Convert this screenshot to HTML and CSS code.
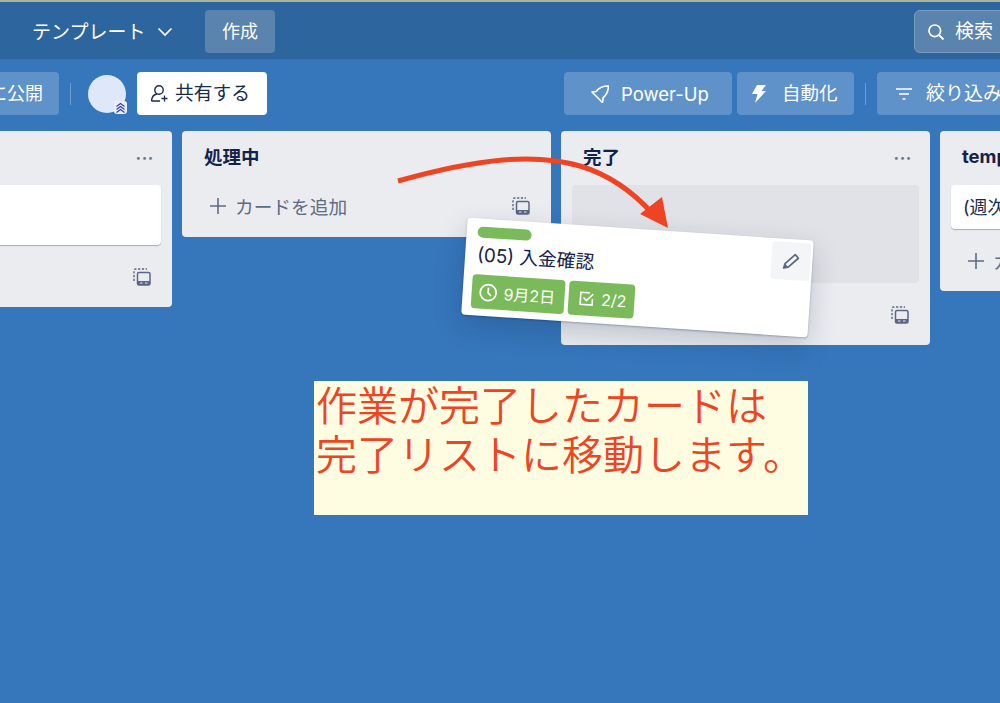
FILE: index.html
```html
<!DOCTYPE html>
<html lang="ja">
<head>
    <meta charset="UTF-8">
    <title>ボード</title>
    <link rel="stylesheet" href="styles.css">
</head>
<body>
    <header class="topbar">
        <div class="topbar-left">
            <a class="menu-link" href="#"><span class="jp">テンプレート</span>
                <svg class="chevron" width="16" height="10" viewBox="0 0 16 10"><path d="M1.500 1.500 8 8l6.500-6.500" fill="none" stroke="currentColor" stroke-width="1.700"/></svg>
            </a>
            <button class="create-btn"><span class="jp">作成</span></button>
        </div>
        <div class="search">
            <svg width="18" height="18" viewBox="0 0 18 18"><circle cx="7.800" cy="7.800" r="5.800" fill="none" stroke="currentColor" stroke-width="1.700"/><path d="m12 12 4.500 4.500" stroke="currentColor" stroke-width="1.800"/></svg>
            <span class="jp">検索</span>
        </div>
    </header>

    <nav class="boardbar">
        <div class="boardbar-left">
            <button class="bar-btn public-btn"><span class="jp">に公開</span></button>
            <span class="divider"></span>
            <span class="avatar">
                <span class="avatar-badge">
                    <svg width="11" height="11" viewBox="0 0 11 11"><path d="M1.500 4.500 5.500 1.500l4 3M1.500 7.500l4-3 4 3M1.500 10.500l4-3 4 3" fill="none" stroke="#2a3fb0" stroke-width="1.100"/></svg>
                </span>
            </span>
            <button class="share-btn">
                <svg width="19" height="19" viewBox="0 0 19 19"><circle cx="9" cy="6" r="4.200" fill="none" stroke="#1c2b4f" stroke-width="1.400"/><path d="M1.500 17c.3-4 2.500-6.500 5.500-7M10 17H1.500" fill="none" stroke="#1c2b4f" stroke-width="1.400"/><path d="M14.500 11.500v6M11.500 14.500h6" stroke="#1c2b4f" stroke-width="1.300"/></svg>
                <span class="jp">共有する</span>
            </button>
        </div>
        <div class="boardbar-right">
            <button class="bar-btn powerup-btn">
                <svg width="18" height="18" viewBox="0 0 18 18"><path d="M17.500 1C12 1 7.500 3 5 6.500L1 7l4 4 3 3 3.500 3.500.8-5C15.500 10 17.200 6 17.500 1z" fill="none" stroke="currentColor" stroke-width="1.600" stroke-linejoin="round"/></svg>
                Power-Up
            </button>
            <button class="bar-btn auto-btn">
                <svg width="14" height="18" viewBox="0 0 14 18"><path d="M5 0h9L9.500 6H14L3 18l2.500-9H0z" fill="currentColor"/></svg>
                <span class="jp">自動化</span>
            </button>
            <span class="divider"></span>
            <button class="bar-btn filter-btn">
                <svg width="16" height="12" viewBox="0 0 16 12"><path d="M0 1h16M3 6h10M6.500 11h3" stroke="currentColor" stroke-width="1.600"/></svg>
                <span class="jp">絞り込み</span>
            </button>
        </div>
    </nav>

    <main class="board">
        <section class="list">
            <div class="list-head"><h2></h2><span class="dots">•••</span></div>
            <div class="card card-blank"></div>
            <div class="list-foot">
                <span class="foot-spacer"></span>
                <svg class="tpl-icon" width="18" height="18" viewBox="0 0 18 18"><use href="#tpl"/></svg>
            </div>
        </section>

        <section class="list">
            <div class="list-head"><h2>処理中</h2><span class="dots">•••</span></div>
            <div class="list-foot list-foot-tight">
                <span class="add-card"><svg width="18" height="18" viewBox="0 0 18 18"><path d="M9 1v16M1 9h16" stroke="currentColor" stroke-width="1.600"/></svg><span class="jp">カードを追加</span></span>
                <svg class="tpl-icon" width="18" height="18" viewBox="0 0 18 18"><use href="#tpl"/></svg>
            </div>
        </section>

        <section class="list">
            <div class="list-head"><h2>完了</h2><span class="dots">•••</span></div>
            <div class="card-slot"></div>
            <div class="list-foot">
                <span class="foot-spacer"></span>
                <svg class="tpl-icon" width="18" height="18" viewBox="0 0 18 18"><use href="#tpl"/></svg>
            </div>
        </section>

        <section class="list">
            <div class="list-head"><h2>template</h2></div>
            <div class="card card-text">(週次</div>
            <div class="list-foot">
                <span class="add-card"><svg width="18" height="18" viewBox="0 0 18 18"><path d="M9 1v16M1 9h16" stroke="currentColor" stroke-width="1.600"/></svg><span class="jp">カードを追加</span></span>
            </div>
        </section>
    </main>

    <!-- dragged card and annotations sit over the board -->
    <article class="drag-card">
        <span class="label"></span>
        <p class="drag-title">(05) 入金確認</p>
        <div class="badges">
            <span class="badge">
                <svg width="19" height="19" viewBox="0 0 19 19"><circle cx="9.500" cy="9.500" r="8" fill="none" stroke="#fff" stroke-width="1.700"/><path d="M9.500 4.500v5.200l3 3" fill="none" stroke="#fff" stroke-width="1.700"/></svg>
                9月2日
            </span>
            <span class="badge badge-check">
                <svg width="16" height="16" viewBox="0 0 16 16"><path d="M14 8v6H2V2h9" fill="none" stroke="#fff" stroke-width="1.600"/><path d="m5 7 3 3 6.500-7" fill="none" stroke="#fff" stroke-width="1.600"/></svg>
                2/2
            </span>
        </div>
        <span class="edit-btn">
            <svg width="18" height="18" viewBox="0 0 16 16"><path d="M1.500 14.500 2.500 10.500 11 2l3 3-8.500 8.500z" fill="none" stroke="#5a6785" stroke-width="1.500" stroke-linejoin="round"/><path d="M1.500 14.500 2.500 10.500l3 3z" fill="#5a6785"/></svg>
        </span>
    </article>

    <svg class="arrow" width="1000" height="260" viewBox="0 0 1000 260">
        <path d="M398 181C480 158 535 153 580 166 610 175 632 191 652 213" fill="none" stroke="#ef4423" stroke-width="5"/>
        <path d="M668 228 640 214 662 197z" fill="#ef4423"/>
    </svg>

    <div class="note">作業が完了したカードは<br>完了リストに移動します。</div>

    <svg class="sprite" width="0" height="0">
        <symbol id="tpl" viewBox="0 0 18 18">
            <path d="M1 13V2.500A1.500 1.500 0 0 1 2.500 1H14" fill="none" stroke="#5a6785" stroke-width="1.400" stroke-dasharray="2.200 1.600"/>
            <rect x="4.500" y="4.500" width="12.500" height="12.500" rx="1.500" fill="none" stroke="#5a6785" stroke-width="1.500"/>
            <path d="M4.500 13h12.500v2.500a1.500 1.500 0 0 1-1.500 1.500h-9.500a1.500 1.500 0 0 1-1.500-1.500z" fill="#5a6785"/>
            <path d="M7 15h2.500M12 15h2.500" stroke="#ebecf0" stroke-width="1"/>
        </symbol>
    </svg>
</body>
</html>
```

FILE: styles.css
```css
* {
    box-sizing: border-box;
}

html, body {
    height: 100%;
}

body {
    margin: 0;
    position: relative;
    overflow: hidden;
    background: #3676bb;
    color: #172b4d;
    font-family: Inter, "Noto Sans CJK JP", sans-serif;
}

button {
    font: inherit;
    border: none;
}

.jp {
    margin-bottom: 4px;
}

.topbar {
    height: 60px;
    padding: 8px 0 6px 32px;
    display: flex;
    justify-content: space-between;
    align-items: center;
    background: #2d659e;
    border-top: 2px solid #a9b59a;
    border-bottom: 1px solid #3a70a8;
    color: #fff;
}

.topbar-left {
    display: flex;
    align-items: center;
}

.menu-link {
    display: flex;
    align-items: center;
    gap: 12px;
    width: 173px;
    color: #fff;
    font-size: 19px;
    text-decoration: none;
}

.menu-link .jp {
    margin-bottom: 2px;
}

.create-btn {
    width: 70px;
    height: 43px;
    display: flex;
    align-items: center;
    justify-content: center;
    border-radius: 4px;
    background: #5a83ae;
    color: #fff;
    font-size: 18px;
}

.search {
    width: 96px;
    height: 43px;
    margin-right: -10px;
    padding-left: 12px;
    display: flex;
    align-items: center;
    gap: 10px;
    font-size: 19px;
    background: #5a83ae;
    border: 1px solid #7a9bbf;
    border-radius: 6px;
}

.boardbar {
    height: 71px;
    padding-top: 12px;
    display: flex;
    justify-content: space-between;
    align-items: flex-start;
}

.boardbar-left, .boardbar-right {
    display: flex;
    align-items: center;
}

.bar-btn {
    height: 43px;
    display: flex;
    align-items: center;
    border-radius: 4px;
    background: #5f92c9;
    color: #fff;
    font-size: 18.500px;
    white-space: nowrap;
}

.public-btn {
    width: 80px;
    margin-left: -21px;
    justify-content: flex-end;
    padding-right: 16px;
    font-size: 18px;
}

.divider {
    width: 1px;
    height: 22px;
    margin: 0 11px;
    background: #6d9bcd;
}

.avatar {
    position: relative;
    width: 38px;
    height: 38px;
    margin: 0 11px 0 6px;
    border-radius: 50%;
    background: #dfe8fb;
}

.avatar-badge {
    position: absolute;
    right: -1px;
    bottom: -1px;
    width: 13px;
    height: 13px;
    display: flex;
    align-items: center;
    justify-content: center;
    border-radius: 3px;
    background: #e8edf8;
}

.share-btn {
    width: 130px;
    height: 43px;
    padding-left: 13px;
    display: flex;
    align-items: center;
    gap: 6px;
    border-radius: 4px;
    background: #fff;
    color: #172b4d;
    font-size: 18.800px;
}

.boardbar-right {
    margin-right: -10px;
}

.powerup-btn {
    width: 168px;
    padding-left: 27px;
    gap: 12px;
    margin-right: 5px;
}

.auto-btn {
    width: 117px;
    padding-left: 15px;
    gap: 16px;
}

.filter-btn {
    width: 133px;
    padding-left: 19px;
    gap: 14px;
    font-size: 19px;
}

.board {
    display: flex;
    align-items: flex-start;
    gap: 10px;
    margin-left: -197px;
}

.list {
    flex: 0 0 369px;
    padding: 0 11px;
    border-radius: 4px;
    background: #ebecf0;
}

.list-head {
    height: 54px;
    display: flex;
    justify-content: space-between;
    align-items: center;
    padding: 0 7px 0 11px;
}

.list-head h2 {
    margin: 0 0 4px;
    font-size: 18.500px;
    font-weight: 700;
    color: #14224a;
}

.dots {
    margin-bottom: 2px;
    font-size: 9px;
    letter-spacing: 1px;
    color: #6b778c;
}

.card {
    border-radius: 4px;
    background: #fff;
    box-shadow: 0 1px 1px rgba(9, 30, 66, .3);
}

.card-blank {
    height: 60px;
}

.card-text {
    height: 44px;
    padding: 0 12px 2px;
    display: flex;
    align-items: center;
    font-size: 18px;
}

.card-slot {
    height: 98px;
    border-radius: 4px;
    background: #e0e2e7;
}

.list-foot {
    height: 62px;
    padding: 2px 10px 0 16px;
    display: flex;
    justify-content: space-between;
    align-items: center;
}

.list-foot-tight {
    height: 52px;
    padding-top: 0;
    padding-bottom: 10px;
}

.add-card {
    display: flex;
    align-items: center;
    gap: 8px;
    font-size: 18.700px;
    color: #5e6c84;
    white-space: nowrap;
}

.add-card .jp {
    margin-bottom: 2px;
}

.tpl-icon {
    flex: none;
}

.sprite {
    position: absolute;
}

.drag-card {
    position: absolute;
    left: 464px;
    top: 229px;
    width: 347px;
    height: 97px;
    padding: 8px 10px 0 5px;
    border-radius: 4px;
    background: #fff;
    box-shadow: 0 10px 28px rgba(9, 30, 66, .2), 0 1px 2px rgba(9, 30, 66, .3);
    transform: rotate(3.800deg);
}

.label {
    display: block;
    width: 54px;
    height: 11px;
    margin-left: 6px;
    border-radius: 6px;
    background: #7aba5a;
}

.drag-title {
    margin: 6px 0 7px 7px;
    font-size: 18.800px;
    line-height: 24px;
    color: #14224a;
}

.badges {
    display: flex;
    gap: 4px;
    margin-left: 4px;
}

.badge {
    height: 34px;
    padding: 0 9px 0 7px;
    display: flex;
    align-items: center;
    gap: 6px;
    border-radius: 4px;
    background: #7aba5a;
    color: #fff;
    font-size: 16px;
}

.badge-check {
    padding: 0 8px 0 10px;
    gap: 7px;
}

.edit-btn {
    position: absolute;
    top: 3px;
    right: 2px;
    width: 39px;
    height: 38px;
    display: flex;
    align-items: center;
    justify-content: center;
    border-radius: 4px;
    background: #f4f5f7;
}

.arrow {
    position: absolute;
    left: 0;
    top: 0;
}

.note {
    position: absolute;
    left: 314px;
    top: 381px;
    width: 494px;
    height: 134px;
    padding: 1px 2px;
    background: #fefde2;
    color: #ef4423;
    font-size: 41px;
    font-weight: 350;
    line-height: 49px;
    white-space: nowrap;
}
```
